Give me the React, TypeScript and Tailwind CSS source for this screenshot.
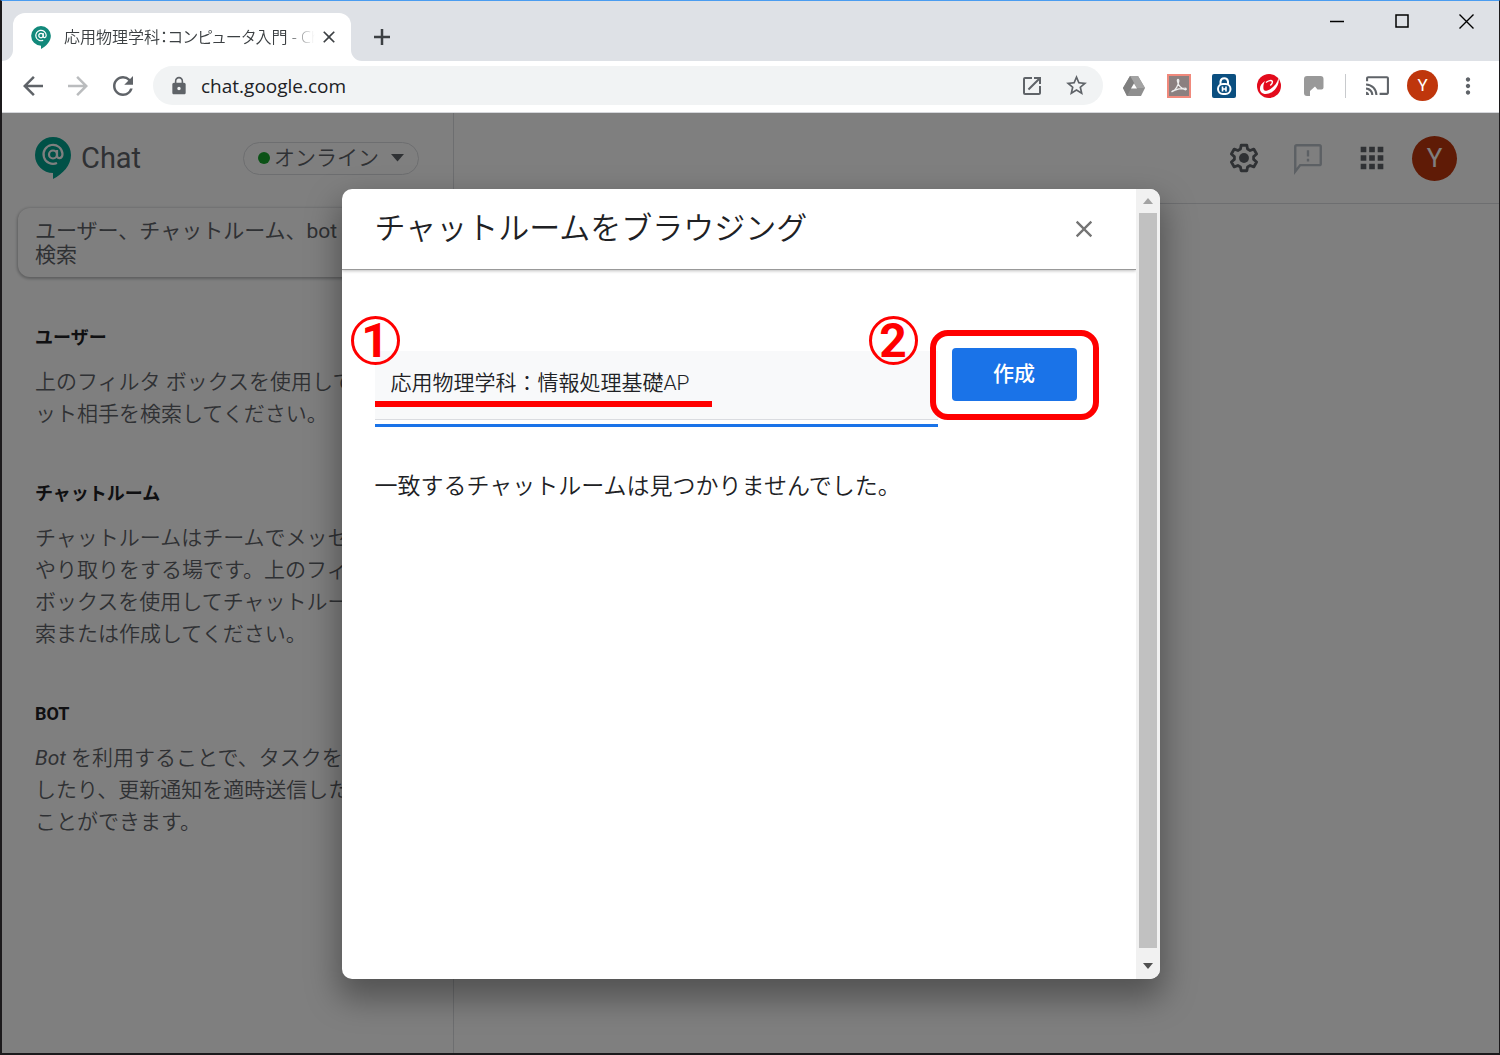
import React, { useState } from 'react';
import { MdApps, MdArrowBack, MdArrowForward, MdCast, MdClose, MdLock, MdMoreVert, MdOpenInNew, MdRefresh, MdStarBorder } from 'react-icons/md';

const jp = "font-['Roboto','Noto_Sans_CJK_JP',sans-serif]";
const ui = "font-['Open_Sans','Noto_Sans_CJK_JP',sans-serif]";

function ChatLogo({ className }: { className: string }) {
  return (
    <svg viewBox="0 0 36 42" className={className} aria-hidden="true">
      <path d="M18 0a18 18 0 0 1 18 18c0 10-8 19-18 24v-6A18 18 0 0 1 18 0z" fill="currentColor" />
      <circle cx="18" cy="17.500" r="4" fill="none" stroke="#fff" strokeWidth="2.200" />
      <path d="M22 13v5.500c0 4 5.500 3.500 5.500-1.500A9.500 9.500 0 1 0 22 26" fill="none" stroke="#fff" strokeWidth="2.200" />
    </svg>
  );
}

function DriveIcon() {
  return (
    <svg width="24" height="24" viewBox="0 0 24 24" aria-hidden="true">
      <path d="M8 2h8l7 12-4 8H5l-4-8z" fill="#8f8f8f" />
      <path d="M8 2h8l7 12h-8z" fill="#a3a3a3" />
      <path d="M8 2l4 7-7 13-4-8z" fill="#7f7f7f" />
      <path d="M12 9.500l3 5H9z" fill="#fff" />
    </svg>
  );
}

function PdfIcon() {
  return (
    <svg width="24" height="24" viewBox="0 0 24 24" aria-hidden="true">
      <rect x="1" y="1" width="22" height="22" fill="#8b8080" stroke="#f0897c" strokeWidth="2" />
      <path d="M5.500 17.500c3-1 6-6.500 6.300-10.500 0-2-1.600-2-1.400 0 .4 3.500 3.600 8 7.600 8.700 1.800.3 1.600-1.700-.3-1.600-3.700 0-7.700.9-11.200 2.600-1.800.9-2.200 1.300-1 .8z" fill="none" stroke="#eee" strokeWidth="1.300" />
    </svg>
  );
}

function PadlockIcon() {
  return (
    <svg width="24" height="24" viewBox="0 0 24 24" aria-hidden="true">
      <rect width="24" height="24" rx="2" fill="#0b4f80" />
      <path d="M8.500 10.500V7.500a3.800 3.800 0 0 1 7.500 0v3" fill="none" stroke="#fff" strokeWidth="2" />
      <rect x="6" y="10" width="12.500" height="10" rx="5" fill="none" stroke="#fff" strokeWidth="2" />
      <path d="M10.500 12.500v5M14 12.500v5M10.500 15H14" stroke="#fff" strokeWidth="1.600" />
    </svg>
  );
}

function SwirlIcon() {
  return (
    <svg width="24" height="24" viewBox="0 0 24 24" aria-hidden="true">
      <circle cx="12" cy="12" r="12" fill="#e30b1c" />
      <path d="M8 7C3.500 10 1.500 14.500 4 18c3.500 4 10.500 1.500 14-2.500C21 12 22.500 7.500 21.500 4c-1 4.500-4 8.500-8 11-3.500 2.300-6.500 2.500-7 0C6.100 12.500 6.500 9.500 8 7z" fill="#fff" />
      <path d="M9 8.500c2.500-2 5.500-2.500 6.300-1.200.5 1.300-.7 3-2 4.200" fill="none" stroke="#fff" strokeWidth="1.400" />
    </svg>
  );
}

function CardIcon() {
  return (
    <svg width="24" height="24" viewBox="0 0 24 24" aria-hidden="true">
      <path d="M5 2h13.500a3 3 0 0 1 3 3v8.500a2 2 0 0 1-2 2h-4L13 12.500l-5 4.500v5H5a3 3 0 0 1-3-3V5a3 3 0 0 1 3-3z" fill="#999" />
    </svg>
  );
}

function GearIcon() {
  return (
    <svg width="34" height="34" viewBox="0 0 24 24" aria-hidden="true">
      <path d="M10 3h4l.5 2.700 1.800 1 2.600-1 2 3.500-2.100 1.800v2l2.100 1.800-2 3.500-2.600-1-1.800 1L14 21h-4l-.5-2.700-1.800-1-2.600 1-2-3.500L5.200 13v-2L3.100 9.200l2-3.500 2.600 1 1.800-1z" fill="none" stroke="#5f6368" strokeWidth="2" strokeLinejoin="round" />
      <circle cx="12" cy="12" r="3.500" fill="#5f6368" />
    </svg>
  );
}

function FeedbackIcon() {
  return (
    <svg width="34" height="34" viewBox="0 0 24 24" aria-hidden="true">
      <path d="M3 21.500V4q0-1 1-1h16q1 0 1 1v12q0 1-1 1H6.500z" fill="none" stroke="#b9c0c8" strokeWidth="1.700" />
      <path d="M12 6.500V11M12 12.500v2" stroke="#b9c0c8" strokeWidth="1.700" />
    </svg>
  );
}

function IconButton({ label, children }: { label: string; children: React.ReactNode }) {
  return (
    <button type="button" aria-label={label} className="flex h-10 w-[45px] shrink-0 items-center justify-center text-[#5f6368]">
      {children}
    </button>
  );
}

function TabStrip() {
  return (
    <div className="flex h-[60px] items-end bg-[#dee1e6] pl-[11px]">
      <div className="relative flex h-12 w-[338px] items-center rounded-t-xl bg-white pl-[18px] pr-3">
        <svg width="11" height="11" viewBox="0 0 11 11" className="absolute -left-[11px] bottom-0" aria-hidden="true"><path d="M11 0v11H0A11 11 0 0 0 11 0z" fill="#fff" /></svg>
        <svg width="11" height="11" viewBox="0 0 11 11" className="absolute -right-[11px] bottom-0" aria-hidden="true"><path d="M0 0v11h11A11 11 0 0 1 0 0z" fill="#fff" /></svg>
        <ChatLogo className="h-[23px] w-5 shrink-0 text-[#12897b]" />
        <p className={`${ui} ml-[13px] flex-1 overflow-hidden whitespace-nowrap text-[16px] leading-6 font-[350] text-[#3c4043] [font-feature-settings:'palt'] [mask-image:linear-gradient(to_right,black_90%,transparent)]`}>
          応用物理学科：コンピュータ入門 - Chat
        </p>
        <button type="button" aria-label="タブを閉じる" className="ml-1 text-[#3c4043]"><MdClose size={20} /></button>
      </div>
      <button type="button" aria-label="新しいタブ" className="ml-[22px] flex h-12 w-[18px] items-center text-[#3c4043]">
        <svg width="18" height="18" viewBox="0 0 18 18" aria-hidden="true"><path d="M9 1v16M1 9h16" stroke="currentColor" strokeWidth="2.500" /></svg>
      </button>
      <div className="ml-auto flex self-start text-black">
        <button type="button" aria-label="最小化" className="flex h-10 w-[65px] items-center justify-center">
          <svg width="14" height="14" viewBox="0 0 14 14" aria-hidden="true"><path d="M0 7.500h14" stroke="currentColor" strokeWidth="1.500" /></svg>
        </button>
        <button type="button" aria-label="最大化" className="flex h-10 w-[65px] items-center justify-center">
          <svg width="14" height="14" viewBox="0 0 14 14" aria-hidden="true"><path d="M1 1h12v12H1z" fill="none" stroke="currentColor" strokeWidth="1.500" /></svg>
        </button>
        <button type="button" aria-label="閉じる" className="flex h-10 w-[65px] items-center justify-center">
          <svg width="15" height="15" viewBox="0 0 15 15" aria-hidden="true"><path d="M.5.5l14 14M14.500.5l-14 14" stroke="currentColor" strokeWidth="1.400" /></svg>
        </button>
      </div>
    </div>
  );
}

function Toolbar() {
  return (
    <div className="flex h-[52px] items-center border-b border-[#d5d7db] bg-white pb-[2px] pl-2 pr-[9px]">
      <IconButton label="戻る"><MdArrowBack size={30} /></IconButton>
      <IconButton label="進む"><MdArrowForward size={30} className="text-[#babcbe]" /></IconButton>
      <IconButton label="再読み込み"><MdRefresh size={30} /></IconButton>
      <div className="mx-2 flex h-[39px] flex-1 items-center rounded-full bg-[#f1f3f4] pl-4 pr-[14px]">
        <MdLock size={20} className="shrink-0 text-[#5f6368]" />
        <input aria-label="アドレス" defaultValue="chat.google.com" className={`${ui} ml-3 min-w-0 flex-1 bg-transparent text-[19px] leading-6 text-[#202124] outline-none`} />
        <button type="button" aria-label="新しいウィンドウで開く" className="text-[#5f6368]"><MdOpenInNew size={24} /></button>
        <button type="button" aria-label="ブックマーク" className="ml-5 text-[#5f6368]"><MdStarBorder size={25} /></button>
      </div>
      <IconButton label="ドライブ"><DriveIcon /></IconButton>
      <IconButton label="PDF"><PdfIcon /></IconButton>
      <IconButton label="パスワード"><PadlockIcon /></IconButton>
      <IconButton label="セキュリティ"><SwirlIcon /></IconButton>
      <IconButton label="拡張機能"><CardIcon /></IconButton>
      <span className="mx-[9px] h-6 w-px bg-[#c8cacd]" />
      <IconButton label="キャスト"><MdCast size={25} /></IconButton>
      <IconButton label="プロフィール">
        <span className="flex size-[31px] items-center justify-center rounded-full bg-[#bf360c] font-['Roboto',sans-serif] text-[17px] text-white">Y</span>
      </IconButton>
      <IconButton label="メニュー"><MdMoreVert size={26} /></IconButton>
    </div>
  );
}

function SidebarSection({ title, children }: { title: string; children: React.ReactNode }) {
  return (
    <section className="mb-[52px] space-y-4">
      <h2 className="text-[18px] leading-6 font-bold text-[#202124]">{title}</h2>
      <p className="text-[21px] leading-8 font-[350] text-[#5f6368] [line-break:loose]">{children}</p>
    </section>
  );
}

function Sidebar() {
  return (
    <aside className="w-[452px] shrink-0 border-r border-[#dadce0]">
      <div className="flex h-[90px] items-center pl-[33px] pr-[34px]">
        <ChatLogo className="h-[42px] w-9 text-[#00a28f]" />
        <span className="ml-[10px] text-[29px] leading-8 text-[#5f6368]">Chat</span>
        <button type="button" className="ml-auto flex h-[33px] items-center rounded-full border border-[#dadce0] px-[14px] text-[21px] leading-8 font-[350] text-[#5f6368]">
          <span className="mr-1 size-3 rounded-full bg-[#16a52c]" />
          オンライン
          <svg width="13" height="8" viewBox="0 0 13 8" className="ml-3" aria-hidden="true"><path d="M0 0h13L6.500 7.500z" fill="#5f6368" /></svg>
        </button>
      </div>
      <textarea
        aria-label="検索"
        rows={2}
        placeholder="ユーザー、チャットルーム、bot を検索"
        className="mx-4 mt-[5px] block h-[69px] w-[417px] resize-none overflow-hidden rounded-xl py-[11px] pl-[17px] pr-16 text-[21px] leading-6 font-normal shadow-[0_1px_3px_1px_rgba(60,64,67,0.35)] outline-none placeholder:text-[#5f6368]"
      />
      <div className="pl-[33px] pr-[39px] pt-[49px]">
        <SidebarSection title="ユーザー">上のフィルタ ボックスを使用してチャット相手を検索してください。</SidebarSection>
        <SidebarSection title="チャットルーム">チャットルームはチームでメッセージをやり取りをする場です。上のフィルタ ボックスを使用してチャットルームを検索または作成してください。</SidebarSection>
        <SidebarSection title="BOT"><i className="font-normal">Bot</i> を利用することで、タスクを自動化したり、更新通知を適時送信したりすることができます。</SidebarSection>
      </div>
    </aside>
  );
}

function AppHeader() {
  return (
    <header className="flex h-[91px] items-center justify-end border-b border-[#dadce0] pr-[42px]">
      <button type="button" aria-label="設定" className="flex w-16 justify-center"><GearIcon /></button>
      <button type="button" aria-label="フィードバック" className="flex w-16 justify-center"><FeedbackIcon /></button>
      <button type="button" aria-label="アプリ" className="flex w-16 justify-center text-[#5f6368]"><MdApps size={34} /></button>
      <button type="button" aria-label="アカウント" className="ml-2 flex size-[45px] items-center justify-center rounded-full bg-[#bf360c] text-[26px] text-white">Y</button>
    </header>
  );
}

function StepMark({ children, className }: { children: React.ReactNode; className: string }) {
  return (
    <span className={`${className} absolute flex size-[49px] items-center justify-center rounded-full border-[3px] border-[#f00] text-[48px] leading-none font-bold text-[#f00]`}>
      {children}
    </span>
  );
}

function BrowseDialog() {
  const [name, setName] = useState('応用物理学科：情報処理基礎AP');

  return (
    <div role="dialog" aria-labelledby="dialog-title" className="flex h-[790px] w-[818px] overflow-hidden rounded-[10px] bg-white shadow-[0_16px_32px_4px_rgba(0,0,0,0.35)]">
      <div className="flex-1">
        <div className="flex h-[81px] items-center justify-between border-b border-[#999] pl-[33px] pr-[38px] shadow-[0_1px_3px_rgba(0,0,0,0.25)]">
          <h1 id="dialog-title" className="text-[31px] leading-10 font-[350] text-[#202124]">チャットルームをブラウジング</h1>
          <button type="button" aria-label="閉じる" className="text-[#757575]"><MdClose size={28} /></button>
        </div>
        <div className="pl-[33px] pr-[59px] pt-[78px]">
          <div className="flex items-start gap-[14px]">
            <div className="relative mt-[3px] flex-1">
              <div className="border-b border-[#dadce0] bg-[#f8f9fa]">
                <label htmlFor="room-name" className="sr-only">チャットルーム名</label>
                <input id="room-name" value={name} onChange={e => setName(e.target.value)} className="block h-[68px] w-full bg-transparent px-4 pb-2 text-[21px] font-[350] text-[#202124] outline-none" />
              </div>
              <div className="mt-1 h-[3px] bg-[#1a73e8]" />
              <div className="absolute left-0 top-[50px] h-[6px] w-[337px] bg-[#f00]" />
              <StepMark className="-left-6 -top-[35px]">1</StepMark>
              <StepMark className="right-5 -top-[35px]">2</StepMark>
            </div>
            <div className="relative">
              <button type="button" className="h-[53px] w-[125px] rounded bg-[#1a73e8] pb-[2px] text-[21px] leading-6 font-medium text-white">作成</button>
              <div className="pointer-events-none absolute -inset-x-[22px] -bottom-[19px] -top-[18px] rounded-[18px] border-[6px] border-[#f00]" />
            </div>
          </div>
          <p className="mt-11 text-[23px] leading-8 font-[350] text-[#202124]">一致するチャットルームは見つかりませんでした。</p>
        </div>
      </div>
      <div className="flex w-6 flex-col items-center bg-[#f1f1f1]" aria-hidden="true">
        <div className="flex h-6 items-center"><svg width="10" height="6" viewBox="0 0 10 6"><path d="M0 6h10L5 0z" fill="#a3a3a3" /></svg></div>
        <div className="w-[18px] flex-1 bg-[#c1c1c1]" />
        <div className="flex h-[31px] items-center pt-1"><svg width="10" height="6" viewBox="0 0 10 6"><path d="M0 0h10L5 6z" fill="#505050" /></svg></div>
      </div>
    </div>
  );
}

export default function App() {
  return (
    <div className={`${jp} flex min-h-screen flex-col border-2 border-r border-t border-[#1c1a1c] border-t-[#4a9cf0]`} lang="ja">
      <TabStrip />
      <Toolbar />
      <div className="relative flex flex-1 overflow-hidden bg-white">
        <Sidebar />
        <main className="flex-1"><AppHeader /></main>
        <div className="absolute inset-0 flex items-center justify-center bg-black/50 pt-[2px]">
          <BrowseDialog />
        </div>
      </div>
    </div>
  );
}
